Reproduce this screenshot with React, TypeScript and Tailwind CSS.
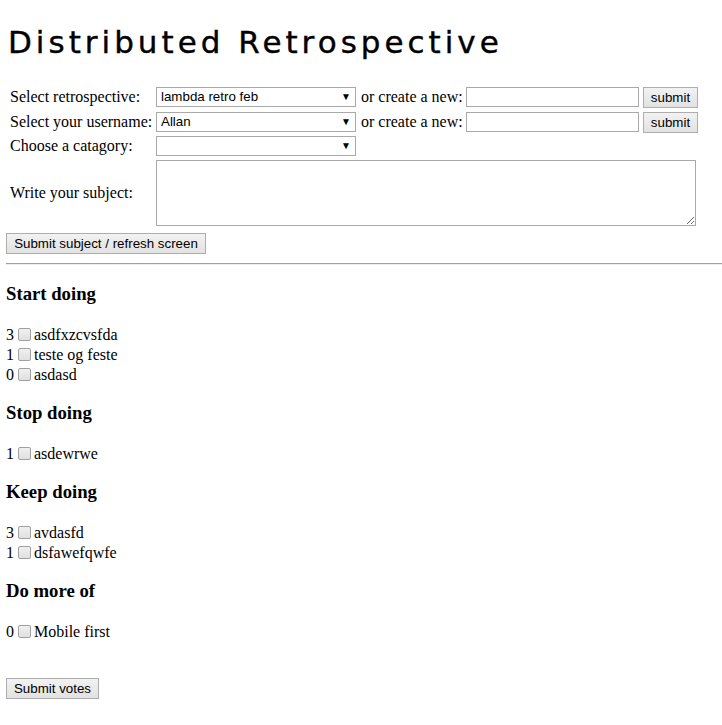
const sections = [
  {
    title: "Start doing",
    items: [
      { votes: 3, text: "asdfxzcvsfda" },
      { votes: 1, text: "teste og feste" },
      { votes: 0, text: "asdasd" },
    ],
  },
  { title: "Stop doing", items: [{ votes: 1, text: "asdewrwe" }] },
  {
    title: "Keep doing",
    items: [
      { votes: 3, text: "avdasfd" },
      { votes: 1, text: "dsfawefqwfe" },
    ],
  },
  { title: "Do more of", items: [{ votes: 0, text: "Mobile first" }] },
]

function Select({ value }: { value: string }) {
  return (
    <div className="w-[200px] h-[20px] border border-[#a9a9a9] bg-white flex items-center pl-[4px] pr-[4px] font-['Liberation_Sans',sans-serif] text-[13.33px]">
      <span className="flex-1">{value}</span>
      <span className="text-[10px] leading-none">▼</span>
    </div>
  )
}

function Button({ label, w }: { label: string; w: string }) {
  return (
    <button
      className={`${w} h-[21px] border border-[#adadad] bg-gradient-to-b from-[#f2f2f2] to-[#e2e2e2] font-['Liberation_Sans',sans-serif] text-[13.33px] leading-none text-black`}
    >
      {label}
    </button>
  )
}

function Checkbox() {
  return (
    <span className="inline-block w-[13px] h-[13px] border border-[#a0a0a0] rounded-[2px] bg-gradient-to-b from-[#f0f0f0] to-[#e0e0e0] mr-[3px] translate-y-[-2px] align-middle" />
  )
}

export default function App() {
  return (
    <div className="min-h-[725px] bg-white text-black font-['Liberation_Serif',serif] text-[16px]">
      <div className="pl-[6px]">
        <h1 className="pt-[20px] h-[66px] pl-[2px] font-['Comic_Sans_MS','DejaVu_Sans',sans-serif] text-[31px] tracking-[4px] leading-[44px] [-webkit-text-stroke:0.4px_black]">
          Distributed Retrospective
        </h1>

        {/* form */}
        <div className="mt-[18px] pl-[4px]">
          <div className="h-[25px] flex items-center">
            <span className="w-[146px]">Select retrospective:</span>
            <Select value="lambda retro feb" />
            <span className="ml-[5px] w-[105px]">or create a new:</span>
            <div className="w-[173px] h-[20px] border border-[#a9a9a9]" />
            <span className="ml-[4px]"><Button label="submit" w="w-[55px]" /></span>
          </div>
          <div className="h-[25px] flex items-center">
            <span className="w-[146px]">Select your username:</span>
            <Select value="Allan" />
            <span className="ml-[5px] w-[105px]">or create a new:</span>
            <div className="w-[173px] h-[20px] border border-[#a9a9a9]" />
            <span className="ml-[4px]"><Button label="submit" w="w-[55px]" /></span>
          </div>
          <div className="h-[24px] flex items-center">
            <span className="w-[146px]">Choose a catagory:</span>
            <Select value="" />
          </div>
          <div className="h-[70px] flex items-center">
            <span className="w-[146px]">Write your subject:</span>
            <textarea className="w-[540px] h-[66px] border border-[#a9a9a9] outline-none" />
          </div>
        </div>

        <div className="mt-[3px]">
          <Button label="Submit subject / refresh screen" w="w-[200px]" />
        </div>
      </div>

      <div className="mt-[8px] ml-[6px] border-t border-t-[#a0a0a0] border-b border-b-[#eeeeee]" />

      <div className="pl-[6px] pt-[1px] pb-[20px]">
        {sections.map((s) => (
          <div key={s.title}>
            <h3 className="font-bold text-[18.72px] leading-[22px] mt-[17px] mb-[20px]">{s.title}</h3>
            {s.items.map((it) => (
              <div key={it.text} className="leading-[20px] h-[20px]">
                {it.votes}{" "}
                <Checkbox />
                {it.text}
              </div>
            ))}
          </div>
        ))}
        <div className="mt-[34px]">
          <Button label="Submit votes" w="w-[93px]" />
        </div>
      </div>
    </div>
  )
}
